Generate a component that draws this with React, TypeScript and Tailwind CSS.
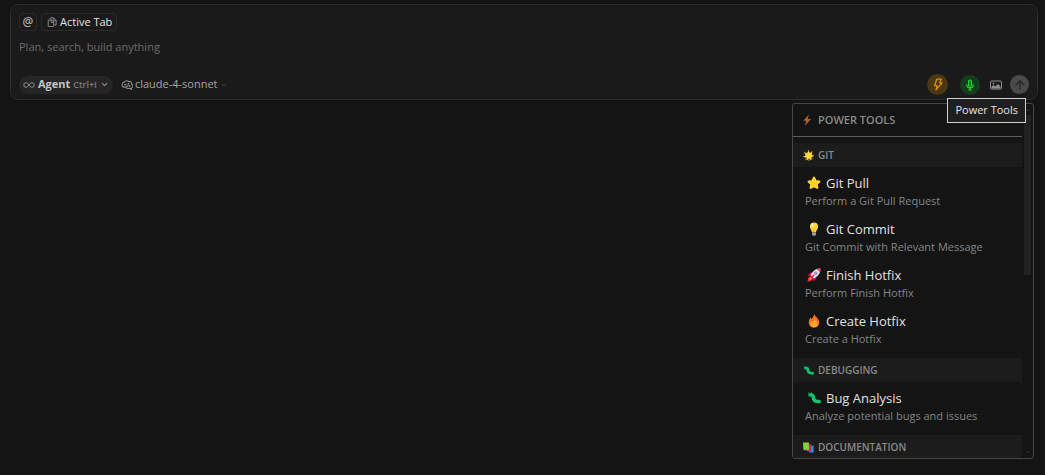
import type { ReactNode } from "react";
import { ArrowUp, ChevronDown } from "lucide-react";

type Tool = { icon: ReactNode; name: string; description: string };
type Group = { icon: ReactNode; title: string; tools: Tool[] };

function Bolt({ className }: { className: string }) {
  return (
    <svg viewBox="0 0 12 16" className={className} aria-hidden="true">
      <path d="M8.500 .5 1 9h4l-2 6.500L11.500 6.500H7z" fill="currentColor" />
    </svg>
  );
}

function Sparkle() {
  return (
    <svg viewBox="0 0 20 20" className="size-[11px]" aria-hidden="true">
      <path
        d="m10 2 2.200 3.500 4.300-1-1 4.300 3.200 2.700-4 1.500.3 4.600-4.200-2-3.700 2.600-.5-4.500L2 12.500l3-2.900-1.500-4.300 4.300.5z"
        fill="#ffd83d"
        stroke="#ffd83d"
        strokeLinejoin="round"
      />
      <path
        d="M10 0v3M17 2l-2 2.500M20 9.500h-3M18 17l-2-2M11 20v-3M4 18.500 6 16M0 12h3M1.500 4 4 6"
        stroke="#d9aa2c"
        strokeWidth="1.500"
      />
    </svg>
  );
}

function Star() {
  return (
    <svg viewBox="0 0 24 24" className="size-[14px]" aria-hidden="true">
      <path
        d="m12 3 2.700 5.700 6.300.8-4.600 4.400 1.200 6.100-5.600-3-5.600 3 1.200-6.100L3 9.500l6.300-.8z"
        fill="#ffd02f"
        stroke="#ffd02f"
        strokeWidth="4"
        strokeLinejoin="round"
      />
    </svg>
  );
}

function Bulb() {
  return (
    <svg viewBox="0 0 24 24" className="size-[14px]" aria-hidden="true">
      <path d="M12 1a7 7 0 0 0-7 7c0 4 3 5.500 3.700 9.500h6.600C16 13.500 19 12 19 8a7 7 0 0 0-7-7z" fill="#fcd53f" />
      <path d="M11 18v-6l-2-2m4 8v-6l2-2" fill="none" stroke="#f5b323" strokeWidth="1.200" />
      <ellipse cx="9.500" cy="5.500" rx="2" ry="2.500" fill="#fff2a0" />
      <path d="M8.500 18h7v3L14 23.500h-4L8.500 21z" fill="#9b9b9b" />
    </svg>
  );
}

function Rocket() {
  return (
    <svg viewBox="0 0 24 24" className="size-[14px]" aria-hidden="true">
      <path d="M10 7 5 8 1 14l6-1zM17 14l-1 5-6 4 1-6z" fill="#ca0b4a" />
      <path d="M6 14c-3 0-5 4-5 9 5 0 9-2 9-5z" fill="#f8312f" />
      <path d="M7 16c-2 0-3 2-3 4 2 0 4-1 4-3z" fill="#ffb02e" />
      <path d="M22 1c-7 0-12 4-16 12l5 5C19 14 23 9 23 2z" fill="#e6e1ec" />
      <path d="M17 2c3-1 4-1 6-1 0 2 0 4-1 6z" fill="#f92f60" />
      <circle cx="15" cy="9" r="2.500" fill="#7fb4e8" stroke="#8f88a8" strokeWidth="1.200" />
      <path d="m7 17 5-5" stroke="#ca0b4a" strokeWidth="2" />
    </svg>
  );
}

function Flame() {
  return (
    <svg viewBox="0 0 24 24" className="size-[14px]" aria-hidden="true">
      <path d="M12 0c1 4 9 7 9 15a9 8.500 0 0 1-18 0c0-4 1-6 3-9 1 1 1 2 1 3 3-3 5-5 5-9z" fill="#ff6f23" />
      <path d="M13 8c1 3 5 5 5 9a6 5.500 0 0 1-12 0c0-2 1-4 2-5 1 1 1 1 1 2 2-2 4-3 4-6z" fill="#ffa52e" />
    </svg>
  );
}

function Caterpillar({ className }: { className: string }) {
  return (
    <svg viewBox="0 0 24 24" className={className} aria-hidden="true">
      <path d="M4 6 2 2m5 4 1-4" stroke="#008463" strokeWidth="1.500" />
      <path
        d="M5 7c5-1 6 1 6 5s3 6 10 6"
        fill="none"
        stroke="#10c56b"
        strokeWidth="6"
        strokeLinecap="round"
      />
      <circle cx="4" cy="8" r="1" fill="#0b4f38" />
    </svg>
  );
}

function Books() {
  return (
    <svg viewBox="0 0 24 24" className="size-[11px]" aria-hidden="true">
      <path d="M13 8h10v15H14z" fill="#3292e6" />
      <path d="M9 5h9v15H9z" fill="#c62c4f" />
      <path d="M0 1h13v15l-12 1z" fill="#86cf3c" />
      <path d="m1 17 12-1v2H2z" fill="#b5bfa8" />
    </svg>
  );
}

const groups: Group[] = [
  {
    icon: <Sparkle />,
    title: "GIT",
    tools: [
      { icon: <Star />, name: "Git Pull", description: "Perform a Git Pull Request" },
      { icon: <Bulb />, name: "Git Commit", description: "Git Commit with Relevant Message" },
      { icon: <Rocket />, name: "Finish Hotfix", description: "Perform Finish Hotfix" },
      { icon: <Flame />, name: "Create Hotfix", description: "Create a Hotfix" },
    ],
  },
  {
    icon: <Caterpillar className="size-[11px]" />,
    title: "DEBUGGING",
    tools: [
      {
        icon: <Caterpillar className="size-[14px]" />,
        name: "Bug Analysis",
        description: "Analyze potential bugs and issues",
      },
    ],
  },
  { icon: <Books />, title: "DOCUMENTATION", tools: [] },
];

function ContextRow() {
  return (
    <div className="flex gap-1">
      <button
        type="button"
        aria-label="Add context"
        className="flex size-[18px] items-center justify-center rounded border border-[#2b2b2b] text-xs leading-none font-semibold text-[#a8a8a8]"
      >
        @
      </button>
      <button
        type="button"
        className="flex h-[18px] items-center gap-[3px] rounded border border-[#2b2b2b] px-1 text-[11px] text-[#e4e4e4]"
      >
        <svg viewBox="0 0 12 12" className="ml-px size-[10px] text-[#858585]" fill="none" stroke="currentColor" strokeWidth="1.200" aria-hidden="true">
          <path d="M4 3V1h4l3 3v5.500H8.500" />
          <path d="M7.500 1v3.500H11M1.500 3.500h4l2.500 2.500v5.500H1.500zM5 3.500V6.500h3" />
        </svg>
        Active Tab
      </button>
    </div>
  );
}

function ModelRow() {
  return (
    <div className="flex items-center gap-2">
      <button
        type="button"
        className="flex h-[18px] items-center rounded-full bg-[#262626] px-1 text-[11px] text-[#c4c4c4]"
      >
        <svg viewBox="0 0 24 12" className="h-[6px] w-3 text-[#8c8c8c]" fill="none" stroke="currentColor" strokeWidth="2" aria-hidden="true">
          <path d="M12 6c-2-3-3.500-4.500-6-4.500a4.500 4.500 0 0 0 0 9c2.500 0 4-1.500 6-4.500s3.500-4.500 6-4.500a4.500 4.500 0 0 1 0 9c-2.500 0-4-1.500-6-4.500z" />
        </svg>
        <span className="ml-[3px] font-bold">Agent</span>
        <span className="ml-[3px] text-[9px] font-semibold text-[#7c7c7c]">Ctrl+I</span>
        <ChevronDown className="ml-[3px] size-[9px] text-[#8c8c8c]" strokeWidth={3} />
      </button>
      <button type="button" className="flex items-center text-[11px] text-[#a4a4a4]">
        <svg viewBox="0 0 14 12" className="h-[10px] w-3 text-[#8c8c8c]" fill="none" stroke="currentColor" strokeWidth="1.300" aria-hidden="true">
          <path d="M5 8.500H3.500A2.300 2.300 0 0 1 1.500 5 2.500 2.500 0 0 1 4 2.500 3 3 0 0 1 9 2a2.500 2.500 0 0 1 3.500 3A2.300 2.300 0 0 1 12 9.500l.5 2-2-1.500C8 10.500 6.500 10 5 8.500z" />
          <path d="M3.500 5.500C5 6.500 6 5.500 6 4.500m0 3c1.500.5 2.500-.5 2.500-1.500S8 4 9.500 4m0 4.500c0-1.500 1-2 2-2" />
        </svg>
        <span className="ml-[2px]">claude-4-sonnet</span>
        <ChevronDown className="ml-[2px] size-2 text-[#5a5a5a]" />
      </button>
    </div>
  );
}

function Actions() {
  return (
    <div className="flex items-center">
      <button
        type="button"
        aria-label="Power Tools"
        aria-describedby="power-tip"
        className="flex size-[21px] items-center justify-center rounded-full bg-[#4b3815] text-[#dc9018]"
      >
        <svg viewBox="0 0 12 16" className="h-[13px] w-[10px]" fill="none" stroke="currentColor" strokeWidth="1.500" strokeLinejoin="round" aria-hidden="true">
          <path d="M4.500 1.500h5.500L8 6h3l-7.500 8.500L5 9.500H1.800z" />
        </svg>
      </button>
      <button
        type="button"
        aria-label="Voice input"
        className="ml-3 flex size-5 items-center justify-center rounded-full bg-[#173d1c] text-[#27d72c]"
      >
        <svg viewBox="0 0 12 14" className="h-[12px] w-[10px]" fill="none" stroke="currentColor" strokeWidth="1.400" aria-hidden="true">
          <rect x="4.200" y="1" width="3.600" height="7.500" rx="1.800" fill="#145f1a" />
          <path d="M2 6.500c0 2.500 1.500 4 4 4s4-1.500 4-4M6 10.500V13M4 13h4" />
        </svg>
      </button>
      <button type="button" aria-label="Attach image" className="ml-[10px] text-[#8c8c8c]">
        <svg viewBox="0 0 12 10" className="h-[10px] w-3" fill="none" stroke="currentColor" aria-hidden="true">
          <rect x=".5" y="1" width="11" height="8" rx="1" />
          <path d="M1.500 8.500v-2l2-1.500 1.500 1.500L8 4l2.500 2.500v2z" fill="currentColor" stroke="none" />
          <circle cx="3.500" cy="3.500" r=".9" fill="currentColor" stroke="none" />
        </svg>
      </button>
      <button
        type="button"
        aria-label="Send"
        className="ml-2 flex size-[19px] items-center justify-center rounded-full bg-[#4a4a4a] text-[#222222]"
      >
        <ArrowUp className="size-[14px]" />
      </button>
    </div>
  );
}

function Composer() {
  return (
    <form className="rounded-lg border border-[#2d2d2d] bg-[#1a1a1a] px-2 pt-2 pb-1">
      <ContextRow />
      <input
        type="text"
        aria-label="Prompt"
        placeholder="Plan, search, build anything"
        className="mt-2 block h-4 w-full bg-transparent text-[11px] text-[#dcdcdc] outline-none placeholder:text-[#6c6c6c]"
      />
      <div className="mt-[19px] flex items-center justify-between">
        <ModelRow />
        <Actions />
      </div>
    </form>
  );
}

function ToolGroup({ group }: { group: Group }) {
  return (
    <section className="pt-[6px]">
      <h3 className="mb-px flex h-6 items-center gap-1 bg-[#1c1c1c] pl-[10px] text-[10px] font-semibold text-[#8a8a8a]">
        {group.icon}
        {group.title}
      </h3>
      {group.tools.map((tool) => (
        <button key={tool.name} type="button" className="block w-full px-3 py-[5px] text-left">
          <span className="flex items-center gap-[5px] pl-[2px] text-[13px] leading-5 text-[#e0e0e0]">
            {tool.icon}
            {tool.name}
          </span>
          <span className="block text-[11px] leading-4 whitespace-nowrap text-[#858585]">
            {tool.description}
          </span>
        </button>
      ))}
    </section>
  );
}

function PowerToolsMenu() {
  return (
    <div className="mt-[3px] mr-1 ml-auto flex max-h-[356px] w-[242px] overflow-hidden rounded-[3px] border border-[#474747] bg-[#141414]">
      <div className="min-w-0 flex-1">
        <h2 className="flex h-[33px] items-center gap-[6px] border-b border-[#5c5c5c] pl-[9px] text-[11px] font-semibold text-[#8a8a8a]">
          <Bolt className="h-3 w-[10px] text-[#b5602a]" />
          POWER TOOLS
        </h2>
        {groups.map((group) => (
          <ToolGroup key={group.title} group={group} />
        ))}
      </div>
      <div className="flex w-[11px] flex-col items-center py-[5px]" aria-hidden="true">
        <div className="mb-1 border-x-2 border-b-2 border-x-transparent border-b-[#2b2b2b]" />
        <div className="h-40 w-[7px] bg-[#222222]" />
        <div className="mt-auto border-x-2 border-t-2 border-x-transparent border-t-[#2b2b2b]" />
      </div>
    </div>
  );
}

export default function App() {
  return (
    <main className="relative min-h-screen bg-[#141414] pt-1 pr-[7px] pl-[10px] font-['Open_Sans','Noto_Sans',sans-serif]">
      <Composer />
      <PowerToolsMenu />
      <div
        id="power-tip"
        role="tooltip"
        className="absolute top-[98px] right-[19px] flex h-[25px] items-center border border-[#d0d0d0] bg-[#1f1f1f] px-[7px] text-[11px] text-[#e4e4e4]"
      >
        Power Tools
      </div>
    </main>
  );
}
